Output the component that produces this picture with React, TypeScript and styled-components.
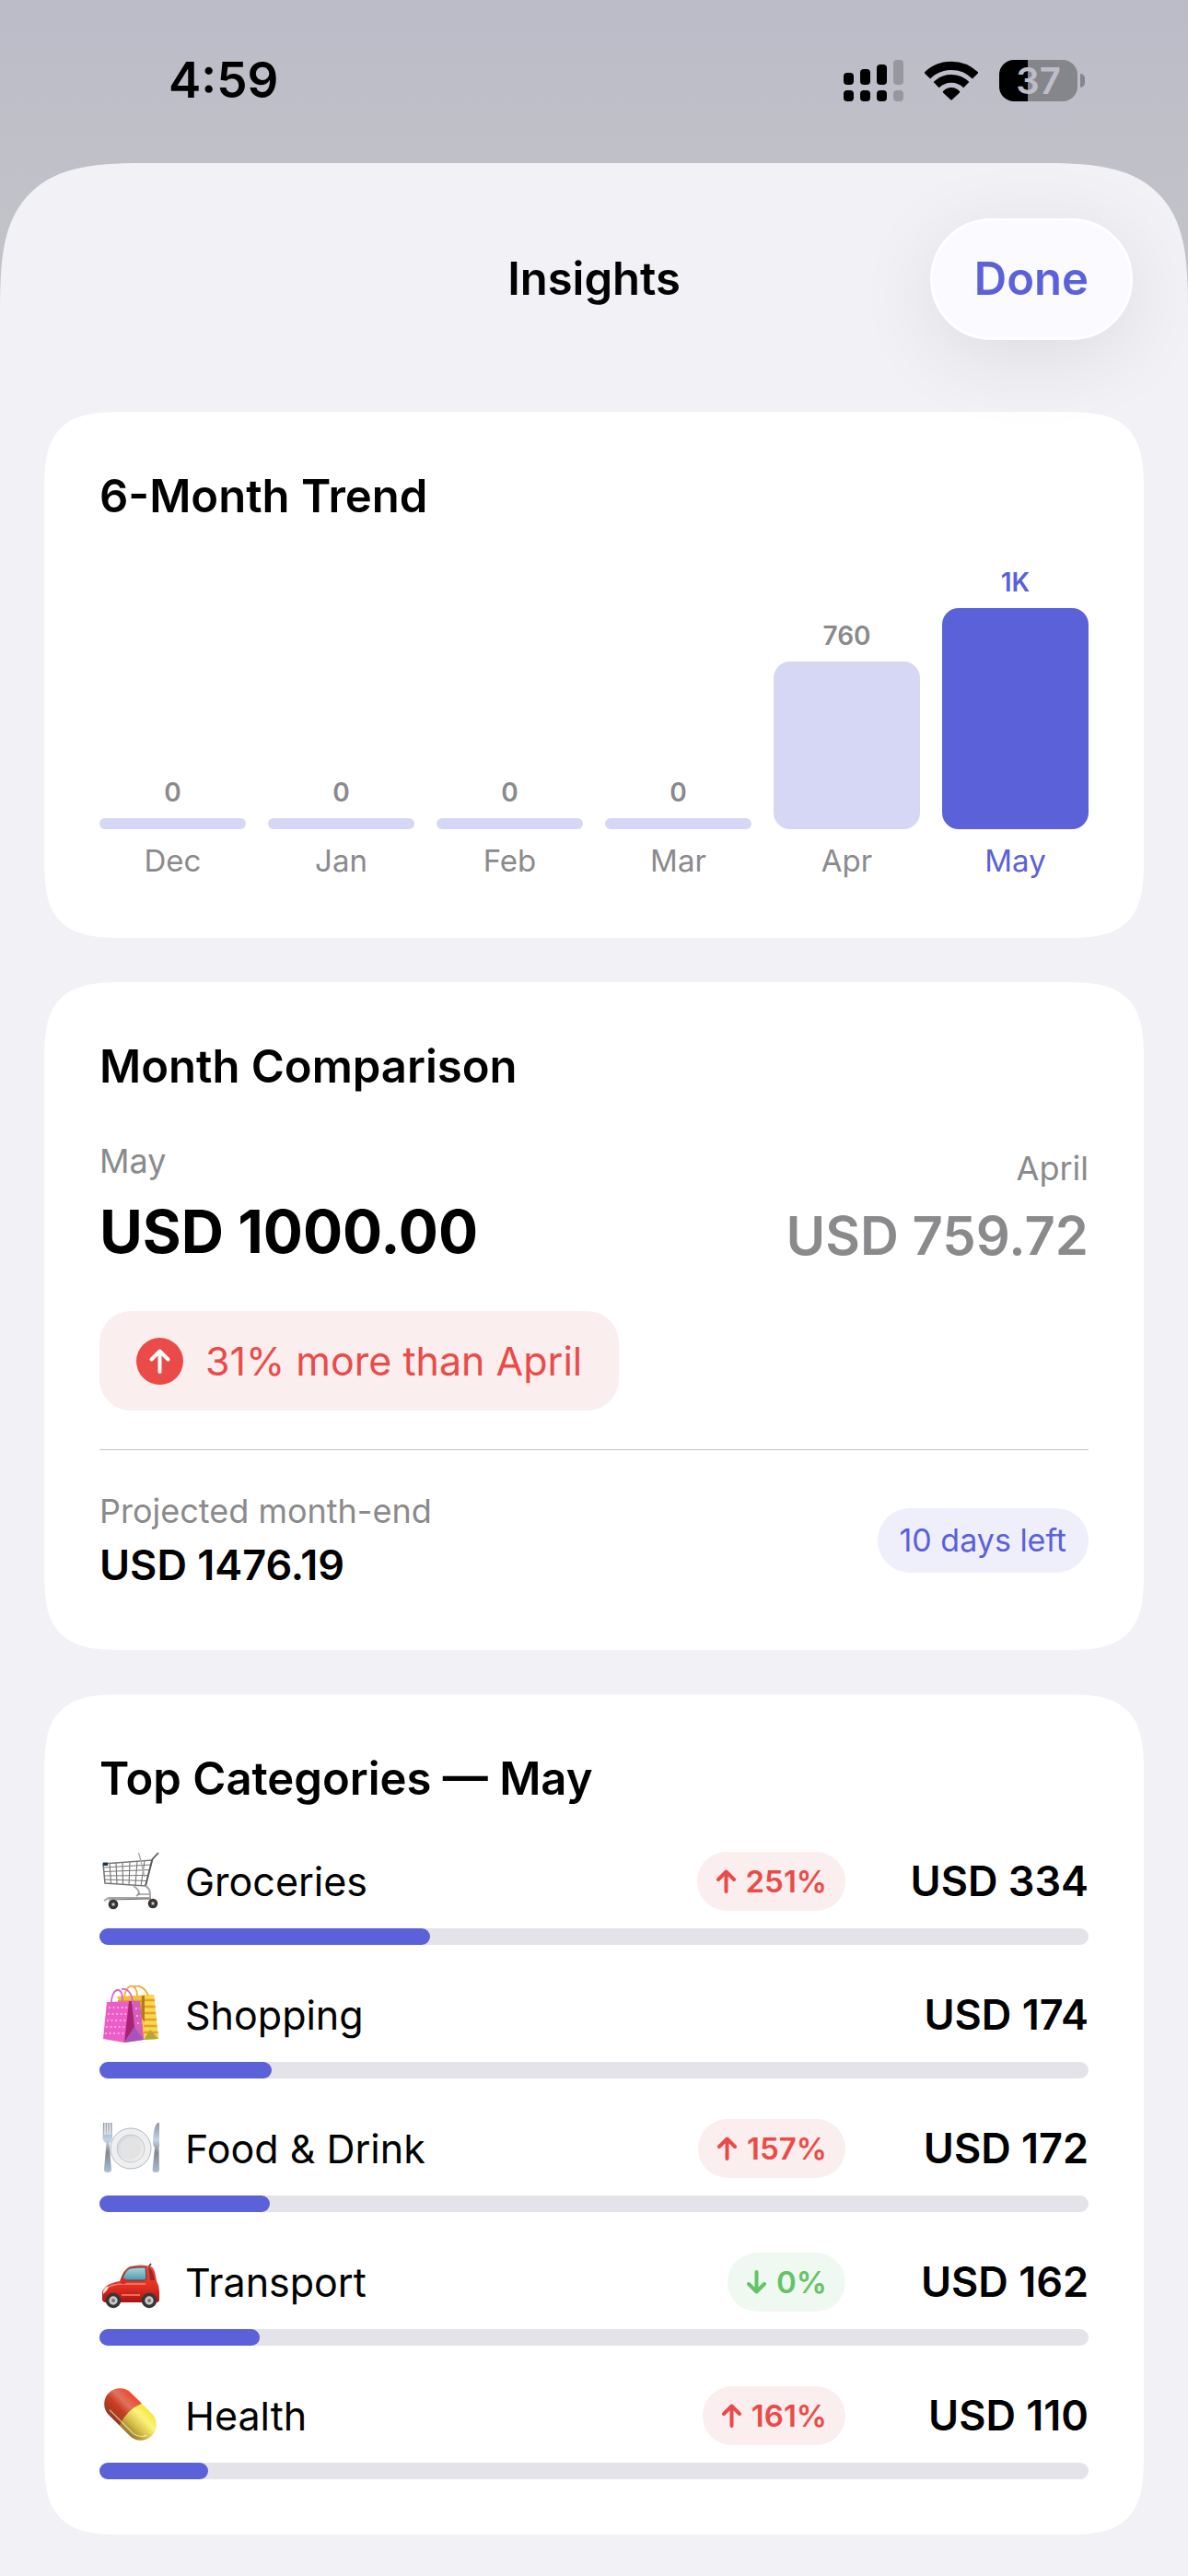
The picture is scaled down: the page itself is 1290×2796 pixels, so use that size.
import styled, { createGlobalStyle, css } from "styled-components";

const ACCENT = "#5b61d9";
const MUTED = "#8a8a8c";
const RED = "#ea4b48";
const GREEN = "#63c466";

const GlobalStyle = createGlobalStyle`
    * {
        box-sizing: border-box;
    }

    body {
        margin: 0;
        background: #c0c0c8;
        font-family: Inter, "Liberation Sans", sans-serif;
        color: #000;
    }

    h1, h2, p, ul {
        margin: 0;
        padding: 0;
    }
`;

// continuous corners where the browser has them, round ones elsewhere
const smoothTop = css`
    border-radius: 114px 114px 0 0;

    @supports (corner-shape: superellipse(1.65)) {
        border-radius: 165px 165px 0 0;
        corner-shape: superellipse(1.65);
    }
`;

const smoothCard = css`
    border-radius: 62px;

    @supports (corner-shape: superellipse(1.65)) {
        border-radius: 90px;
        corner-shape: superellipse(1.65);
    }
`;

const Page = styled.div`
    display: flex;
    flex-direction: column;
    min-height: 100vh;
    background: linear-gradient(#bcbcc9 0, #c0c0c8 180px, #c4c4ca 340px);
`;

const StatusBar = styled.div`
    display: flex;
    align-items: center;
    justify-content: space-between;
    height: 177px;
    padding: 0 112px 3px 183px;
`;

const Time = styled.time`
    font-size: 53px;
    font-weight: 600;
    line-height: 64px;
`;

const StatusIcons = styled.div`
    display: flex;
    align-items: center;
    gap: 23px;
`;

const Battery = styled.div`
    position: relative;
    width: 85px;
    height: 45px;
    margin-right: 8px;
    border-radius: 16px;
    background: linear-gradient(90deg, #000 37%, #85868b 37%);
    color: #bdbdc9;
    font-size: 40px;
    font-weight: 600;
    line-height: 45px;
    text-align: center;

    &::after {
        content: "";
        position: absolute;
        top: 15px;
        right: -8px;
        width: 5px;
        height: 15px;
        border-radius: 0 5px 5px 0;
        background: #85868b;
    }
`;

const Sheet = styled.div`
    flex: 1;
    padding-bottom: 44px;
    background: #f1f1f6;
    ${smoothTop}
`;

const Header = styled.header`
    position: relative;
    z-index: 1;
    display: grid;
    grid-template-columns: 1fr auto 1fr;
    align-items: center;
    padding: 60px 60px 78px;
`;

const Title = styled.h1`
    grid-column: 2;
    font-size: 49px;
    font-weight: 600;
    line-height: 64px;
`;

const DoneButton = styled.button`
    justify-self: end;
    height: 132px;
    padding: 0 45px 2px;
    border: 3px solid #fff;
    border-radius: 66px;
    background: #fafaff;
    box-shadow: 0 18px 90px rgba(0, 0, 0, 0.09);
    color: ${ACCENT};
    font-family: inherit;
    font-size: 49px;
    font-weight: 600;
    cursor: pointer;
`;

const Cards = styled.main`
    display: flex;
    flex-direction: column;
    gap: 48px;
    padding: 0 48px;
`;

const Card = styled.section`
    padding: 60px;
    background: #fff;
    ${smoothCard}
`;

const CardTitle = styled.h2`
    margin-bottom: 43px;
    font-size: 49px;
    font-weight: 600;
    line-height: 64px;
`;

const Chart = styled.div`
    display: flex;
    align-items: flex-end;
    gap: 24px;
`;

const Column = styled.div<{ $active: boolean }>`
    display: flex;
    flex: 1;
    flex-direction: column;
    gap: 10px;
    color: ${({ $active }) => ($active ? ACCENT : MUTED)};
    text-align: center;
`;

const ColumnValue = styled.span`
    font-size: 28px;
    font-weight: 600;
    line-height: 36px;
`;

const ColumnBar = styled.div<{ $active: boolean }>`
    min-height: 12px;
    border-radius: 18px;
    background: ${({ $active }) => ($active ? ACCENT : "#d6d7f5")};
`;

const ColumnLabel = styled.span`
    font-size: 33px;
    line-height: 48px;
`;

const Split = styled.div`
    display: flex;
    align-items: flex-end;
    justify-content: space-between;
`;

const Amount = styled.div<{ $right?: boolean }>`
    display: flex;
    flex-direction: column;
    gap: 10px;
    text-align: ${({ $right }) => ($right ? "right" : "left")};
`;

const Caption = styled.p`
    color: ${MUTED};
    font-size: 36px;
    line-height: 54px;
`;

const CurrentSum = styled.p`
    font-size: 64px;
    font-weight: 700;
    line-height: 80px;
`;

const PreviousSum = styled.p`
    color: ${MUTED};
    font-size: 58px;
    font-weight: 600;
    line-height: 72px;
`;

const Notice = styled.div`
    display: inline-flex;
    align-items: center;
    gap: 24px;
    height: 108px;
    margin: 46px 0 42px;
    padding: 0 40px;
    border-radius: 34px;
    background: #fbeeee;
    color: ${RED};
    font-size: 43px;
`;

const Projection = styled.div`
    display: flex;
    align-items: center;
    justify-content: space-between;
    padding-top: 39px;
    border-top: 1px solid #c6c6c8;
`;

const ProjectedSum = styled.p`
    font-size: 45px;
    font-weight: 600;
    line-height: 64px;
`;

const DaysLeft = styled.span`
    padding: 0 24px;
    border-radius: 35px;
    background: #efeffb;
    color: ${ACCENT};
    font-size: 34px;
    line-height: 70px;
`;

const CategoryList = styled.ul`
    display: flex;
    flex-direction: column;
    gap: 40px;
    list-style: none;
`;

const CategoryRow = styled.div`
    display: flex;
    align-items: center;
    height: 72px;
    margin-bottom: 15px;

    > svg {
        flex: none;
        margin: 0 27px 0 2px;
    }
`;

const CategoryName = styled.span`
    flex: 1;
    font-size: 43px;
    line-height: 56px;
`;

const CategorySum = styled.span`
    width: 264px;
    font-size: 45px;
    font-weight: 600;
    line-height: 56px;
    text-align: right;
`;

const Delta = styled.span<{ $up: boolean }>`
    display: flex;
    align-items: center;
    gap: 10px;
    height: 64px;
    padding: 0 20px;
    border-radius: 32px;
    background: ${({ $up }) => ($up ? "#fbeeee" : "#f0f9f1")};
    color: ${({ $up }) => ($up ? RED : GREEN)};
    font-size: 33px;
    font-weight: 600;
`;

const Track = styled.div`
    height: 18px;
    border-radius: 9px;
    background: #e4e3e9;
`;

const Fill = styled.div`
    height: 100%;
    border-radius: 9px;
    background: ${ACCENT};
`;

const SignalIcon = () => (
    <svg width="65" height="45" viewBox="0 0 65 45" aria-hidden="true">
        <rect x="0" y="14" width="11" height="13" rx="4" />
        <rect x="18" y="10" width="11" height="17" rx="4" />
        <rect x="36" y="5" width="11" height="22" rx="4" />
        <rect x="0" y="33" width="11" height="12" rx="4" />
        <rect x="18" y="33" width="11" height="12" rx="4" />
        <rect x="36" y="33" width="11" height="12" rx="4" />
        <g fill="#97979f">
            <rect x="54" y="0" width="11" height="27" rx="4" />
            <rect x="54" y="33" width="11" height="12" rx="4" />
        </g>
    </svg>
);

const WifiIcon = () => (
    <svg width="58" height="45" viewBox="0 0 58 45" aria-hidden="true">
        <g fill="none" stroke="#000">
            <path d="M2.8 17.2a37 37 0 0 1 52.4 0" strokeWidth="9.4" />
            <path d="M12.7 27.1a23 23 0 0 1 32.6 0" strokeWidth="8.6" />
        </g>
        <path d="M20 34Q24 30 29 30T38 34Q38.500 35 37.800 35.800L30 43Q29 44 28 43L20.200 35.800Q19.500 35 20 34Z" />
    </svg>
);

const CircleArrowIcon = () => (
    <svg width="51" height="51" viewBox="0 0 51 51" aria-hidden="true">
        <circle cx="25.500" cy="25.500" r="25.500" fill={RED} />
        <path d="M25.500 37V14.500M16.500 23.500L25.500 14.500L34.500 23.500" fill="none" stroke="#fff" strokeWidth="4" strokeLinecap="round" strokeLinejoin="round" />
    </svg>
);

const ArrowIcon = ({ up }: { up: boolean }) => (
    <svg width="23" height="26" viewBox="0 0 23 26" aria-hidden="true">
        <path
            d={up ? "M11.500 24V3M3 11L11.500 2.500L20 11" : "M11.500 2V23M3 15L11.500 23.500L20 15"}
            fill="none"
            stroke="currentColor"
            strokeWidth="4"
            strokeLinecap="round"
            strokeLinejoin="round"
        />
    </svg>
);

const CartIcon = () => (
    <svg width="64" height="64" viewBox="0 0 64 64" aria-hidden="true">
        <g fill="none" stroke="#77777a" strokeWidth="1.1">
            <path d="M2 13L55 9L48 37L4 34Z" strokeWidth="1.5" />
            <path d="M2.500 17L54 14M3 21.500L53 19.500M3.200 26L51.500 25.500M3.600 30L50 31.500" />
            <path d="M9 12L10.500 34M16 12L17 35M23 11L23.500 35.500M31 11L30 36M39 10L37 36M47 10L43 37" />
        </g>
        <path d="M40.500 1L43 10L47 27" fill="none" stroke="#aaaaad" strokeWidth="1.4" />
        <path d="M62 1L55.500 8L48 37" fill="none" stroke="#5c5c60" strokeWidth="1.8" />
        <path d="M35 37Q45 44 38 48M48 37Q54 40 53 50L8 50L3 53" fill="none" stroke="#a5a5a9" strokeWidth="2" />
        <path d="M40 46L52 46M8 52L54 51" fill="none" stroke="#6b6b6f" strokeWidth="1" />
        <rect x="2" y="11.500" width="5" height="3.500" fill="#20384f" />
        <g fill="#716b68" stroke="#38332f" strokeWidth="3">
            <circle cx="13" cy="57" r="3.800" />
            <circle cx="56" cy="56" r="3.800" />
        </g>
        <circle cx="13" cy="57" r="1.200" fill="#d8d4d2" />
        <circle cx="56" cy="56" r="1.200" fill="#d8d4d2" />
    </svg>
);

const BagsIcon = () => (
    <svg width="64" height="64" viewBox="0 0 64 64" aria-hidden="true">
        <path d="M17 12L57 10L62 58L40 59Z" fill="#f2c13a" />
        <path d="M44 11L57 10L62 58L46 59Z" fill="#f8d74a" />
        <path d="M18 17H44M45 16H58M44 23H58.500M45 30H59M45 37H60M46 44H60.500M46 51H61.500" stroke="#e2a12f" strokeWidth="2.600" />
        <path d="M44 11L47 11L47 40L43 34Z" fill="#b97716" />
        <path d="M46 59L53 48L62 58Z" fill="#b9a53d" />
        <path d="M25 12C28-3 38-3 39 11M34 2C42-2 48 4 51 11" fill="none" stroke="#efad35" strokeWidth="1.800" />
        <path d="M6 18L42 17L46 59L25 62L2 58Z" fill="#ec5dc8" />
        <path d="M30 17L35 17L36 45L25 62Z" fill="#a92372" />
        <path d="M33 17L42 17L46 59L36 45Z" fill="#d55dbb" />
        <path d="M25 62L36 45L46 59Z" fill="#a455bd" />
        <path d="M8 24H28M7 31H28M6 38H27M5 45H26M4 52H25M37 25H42M38 33H43M39 41H44" stroke="#ffa9e8" strokeWidth="1.800" strokeDasharray="1.800 2.800" />
        <path d="M11 21C10 0 27-1 22 22M22 4C31 3 34 12 34 20" fill="none" stroke="#df66c4" strokeWidth="1.800" />
    </svg>
);

const PlateIcon = () => (
    <svg width="64" height="64" viewBox="0 0 64 64" aria-hidden="true">
        <defs>
            <linearGradient id="steel" x2="0" y2="1">
                <stop offset="0" stopColor="#8f949b" />
                <stop offset="0.350" stopColor="#c3d4e8" />
                <stop offset="0.600" stopColor="#85878c" />
                <stop offset="1" stopColor="#a9bfd8" />
            </linearGradient>
            <linearGradient id="china" x2="1" y2="1">
                <stop offset="0" stopColor="#d3d3d4" />
                <stop offset="1" stopColor="#f4f4f5" />
            </linearGradient>
        </defs>
        <circle cx="32" cy="32" r="22" fill="#eeeff0" stroke="#b4b7bd" strokeWidth="1" />
        <circle cx="32" cy="32" r="15" fill="url(#china)" stroke="#c7c8ca" strokeWidth="1" />
        <circle cx="32" cy="32" r="11.500" fill="#e3e3e3" />
        <path d="M2 4H3.500V17H4.600V4H6.200V17H7.300V4H8.900V17H10V4H11.500L12 20Q12 24 8.500 26L11 55Q11 58 7 58T3 55L5.500 26Q1.500 24 1.500 20Z" fill="url(#steel)" />
        <path d="M63 4V30L62.500 31L63 56Q62 58 59 58T55.500 56L58 31Q56 29 56 25Q57 5 62 4Z" fill="url(#steel)" />
    </svg>
);

const CarIcon = () => (
    <svg width="64" height="64" viewBox="0 0 64 64" aria-hidden="true">
        <defs>
            <linearGradient id="paint" x2="0" y2="1">
                <stop offset="0" stopColor="#f04a38" />
                <stop offset="0.600" stopColor="#e02f22" />
                <stop offset="1" stopColor="#a9130f" />
            </linearGradient>
            <linearGradient id="glass" x2="0" y2="1">
                <stop offset="0" stopColor="#a6d9e2" />
                <stop offset="1" stopColor="#5697a7" />
            </linearGradient>
        </defs>
        <path d="M51 16L54 12" stroke="#333" strokeWidth="1.500" />
        <path d="M20 31Q24 18 31 15Q43 12 54 15Q58 16 60 31Q63 36 63 42V51Q63 54 60 54H5Q1 54 1 50V43Q3 34 20 31Z" fill="url(#paint)" />
        <path d="M22 30Q26 19 31 17Q39 15.500 48 16L49 28Q48 30 46 30Z" fill="url(#glass)" stroke="#33474d" strokeWidth="1" />
        <path d="M51 16Q56 17 58 30L53 30Z" fill="#9d2a23" />
        <path d="M4 40Q10 34 24 34H48M22 46H42" fill="none" stroke="#ff8272" strokeWidth="1.400" />
        <path d="M2 42Q4 36 8 37Q7 41 2 45Z" fill="#f8ded5" />
        <rect x="21" y="28" width="6" height="6" rx="2.500" fill="#d92a20" />
        <g fill="#c9c9ca" stroke="#363636" strokeWidth="3.600">
            <circle cx="13" cy="52" r="6.500" />
            <circle cx="52" cy="52" r="6.500" />
        </g>
        <circle cx="13" cy="52" r="2" fill="#777" />
        <circle cx="52" cy="52" r="2" fill="#777" />
    </svg>
);

const PillIcon = () => (
    <svg width="64" height="64" viewBox="0 0 64 64" aria-hidden="true">
        <defs>
            <linearGradient id="pillRed" x2="0" y2="1">
                <stop offset="0" stopColor="#f4452a" />
                <stop offset="0.350" stopColor="#dc7460" />
                <stop offset="0.600" stopColor="#cc3d22" />
                <stop offset="1" stopColor="#8f3b23" />
            </linearGradient>
            <linearGradient id="pillYellow" x2="0" y2="1">
                <stop offset="0" stopColor="#f6e63a" />
                <stop offset="0.300" stopColor="#fbf47c" />
                <stop offset="0.650" stopColor="#d8bf48" />
                <stop offset="1" stopColor="#94762a" />
            </linearGradient>
        </defs>
        <g transform="rotate(45 31.500 30.500)">
            <path d="M32 13.500H15.500A17 17 0 0 0 15.500 47.500H32Z" fill="url(#pillRed)" />
            <path d="M32 13.500H47.500A17 17 0 0 1 47.500 47.500H32Q25 31 32 13.500Z" fill="url(#pillYellow)" />
            <path d="M12 43H49Q58 41 60 34" fill="none" stroke="#fff3b0" strokeWidth="1.200" opacity="0.700" />
        </g>
    </svg>
);

const MONTHS = [
    { label: "Dec", value: "0", height: 12 },
    { label: "Jan", value: "0", height: 12 },
    { label: "Feb", value: "0", height: 12 },
    { label: "Mar", value: "0", height: 12 },
    { label: "Apr", value: "760", height: 182 },
    { label: "May", value: "1K", height: 240 },
];

const CATEGORIES = [
    { name: "Groceries", icon: <CartIcon />, sum: 334, share: 33.4, delta: 251, up: true },
    { name: "Shopping", icon: <BagsIcon />, sum: 174, share: 17.4 },
    { name: "Food & Drink", icon: <PlateIcon />, sum: 172, share: 17.2, delta: 157, up: true },
    { name: "Transport", icon: <CarIcon />, sum: 162, share: 16.2, delta: 0, up: false },
    { name: "Health", icon: <PillIcon />, sum: 110, share: 11, delta: 161, up: true },
];

const TrendCard = () => (
    <Card>
        <CardTitle>6-Month Trend</CardTitle>
        <Chart>
            {MONTHS.map(({ label, value, height }) => {
                const active = label === "May";
                return (
                    <Column key={label} $active={active}>
                        <ColumnValue>{value}</ColumnValue>
                        <ColumnBar $active={active} style={{ height }} />
                        <ColumnLabel>{label}</ColumnLabel>
                    </Column>
                );
            })}
        </Chart>
    </Card>
);

const ComparisonCard = () => (
    <Card>
        <CardTitle>Month Comparison</CardTitle>
        <Split>
            <Amount>
                <Caption>May</Caption>
                <CurrentSum>USD 1000.00</CurrentSum>
            </Amount>
            <Amount $right>
                <Caption>April</Caption>
                <PreviousSum>USD 759.72</PreviousSum>
            </Amount>
        </Split>
        <Notice>
            <CircleArrowIcon />
            31% more than April
        </Notice>
        <Projection>
            <div>
                <Caption>Projected month-end</Caption>
                <ProjectedSum>USD 1476.19</ProjectedSum>
            </div>
            <DaysLeft>10 days left</DaysLeft>
        </Projection>
    </Card>
);

const CategoriesCard = () => (
    <Card>
        <CardTitle>Top Categories — May</CardTitle>
        <CategoryList>
            {CATEGORIES.map(({ name, icon, sum, share, delta, up }) => (
                <li key={name}>
                    <CategoryRow>
                        {icon}
                        <CategoryName>{name}</CategoryName>
                        {delta !== undefined && (
                            <Delta $up={!!up}>
                                <ArrowIcon up={!!up} />
                                {delta}%
                            </Delta>
                        )}
                        <CategorySum>USD {sum}</CategorySum>
                    </CategoryRow>
                    <Track>
                        <Fill style={{ width: `${share}%` }} />
                    </Track>
                </li>
            ))}
        </CategoryList>
    </Card>
);

const App = () => (
    <Page>
        <GlobalStyle />
        <StatusBar>
            <Time>4:59</Time>
            <StatusIcons>
                <SignalIcon />
                <WifiIcon />
                <Battery>37</Battery>
            </StatusIcons>
        </StatusBar>
        <Sheet>
            <Header>
                <Title>Insights</Title>
                <DoneButton type="button">Done</DoneButton>
            </Header>
            <Cards>
                <TrendCard />
                <ComparisonCard />
                <CategoriesCard />
            </Cards>
        </Sheet>
    </Page>
);

export default App;
